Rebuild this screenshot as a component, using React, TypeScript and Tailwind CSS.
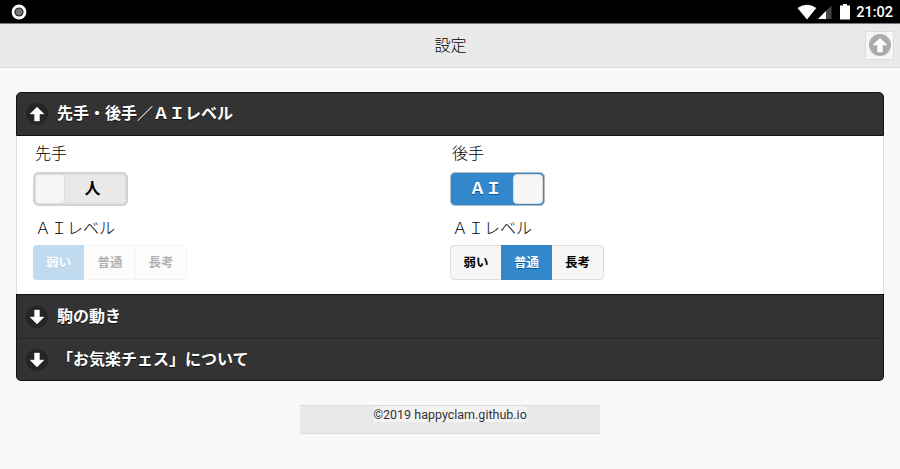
import React from "react";

const UP = "7,0 0,7 4.5,7 4.5,14 9.5,14 9.5,7 14,7";
const DOWN = "9.5,7 9.5,0 4.5,0 4.5,7 0,7 7,14 14,7";

function ArrowDisc({ down, disc }: { down?: boolean; disc: string }) {
  return (
    <svg className="h-[22px] w-[22px] shrink-0" viewBox="0 0 22 22">
      <circle cx="11" cy="11" r="11" fill={disc} />
      <polygon transform="translate(4 4)" points={down ? DOWN : UP} fill="#fff" stroke="#fff" strokeWidth="0.4" />
    </svg>
  );
}

function Heading({ text, down, className }: { text: string; down?: boolean; className: string }) {
  return (
    <h4 className={`flex items-center bg-[#333] pl-[9px] text-base font-bold text-white [text-shadow:0_1px_0_#111] ${className}`}>
      <ArrowDisc down={down} disc="#252525" />
      <span className="ml-[9px] leading-5">{text}</span>
    </h4>
  );
}

function Flip({ on, label }: { on?: boolean; label: string }) {
  return (
    <div
      className={`flex h-[34px] w-[95px] rounded-[5px] border text-base leading-[32px] font-bold ${
        on
          ? "border-[#b5bcc4] bg-[#3388cc] text-white shadow-[inset_0_0_0_1px_#3388cc] [text-shadow:0_1px_0_#005599]"
          : "flex-row-reverse border-[#d2d2d2] bg-[#e9e9e9] text-black shadow-[inset_0_0_3px_rgba(0,0,0,0.25)] [text-shadow:0_1px_0_#f3f3f3]"
      }`}
    >
      <span className={`flex-1 text-center ${on ? "pl-[8px]" : "pr-[8px]"}`}>{label}</span>
      <span className="m-[1px] h-[30px] w-[30px] rounded-[4px] border border-[#ddd] bg-[#f6f6f6]" />
    </div>
  );
}

function Levels({ selected, disabled }: { selected: number; disabled?: boolean }) {
  return (
    <div
      className={`flex h-[35px] w-[154px] rounded-[4px] border border-[#ddd] bg-[#f6f6f6] text-[12.5px] leading-[33px] font-bold ${disabled ? "opacity-30" : ""}`}
    >
      {["弱い", "普通", "長考"].map((t, i) => (
        <span
          key={t}
          className={
            i === selected
              ? `-my-px bg-[#3388cc] py-px text-center text-white [text-shadow:0_1px_0_#005599] ${i === 0 ? "-ml-px w-[51px] rounded-l-[4px]" : "w-[51px]"}`
              : `text-center text-black [text-shadow:0_1px_0_#f3f3f3] ${i === 0 ? "w-[50px]" : "flex-1"} ${i === 2 && selected === 0 ? "border-l border-[#ddd]" : ""} ${i === 1 ? "pl-px" : ""}`
          }
        >
          {t}
        </span>
      ))}
    </div>
  );
}

function Player({ name, on, label, selected, className }: { name: string; on?: boolean; label: string; selected: number; className: string }) {
  return (
    <section className={className}>
      <div className="mt-2 ml-[2px] h-5 text-base leading-5 font-light text-black">{name}</div>
      <div className="mt-[8px]">
        <Flip on={on} label={label} />
      </div>
      <div className="mt-[13px] ml-[2px] h-5 text-base leading-5 font-light text-black">ＡＩレベル</div>
      <div className="mt-[6px]">
        <Levels selected={selected} disabled={!on} />
      </div>
    </section>
  );
}

export default function App() {
  return (
    <div className="h-[469px] w-full overflow-hidden bg-[#f9f9f9] font-[Roboto,'Noto_Sans_CJK_JP',sans-serif] text-[#333] antialiased">
      <div className="flex h-[23px] items-center bg-black text-white">
        <svg className="ml-[11px] h-4 w-4" viewBox="0 0 16 16">
          <circle cx="8" cy="8" r="7.4" fill="#fff" />
          <circle cx="8" cy="8" r="4.6" fill="#333" />
          <circle cx="8" cy="8" r="3.2" fill="#777" />
        </svg>
        <svg className="ml-auto h-[23px] w-[56px]" viewBox="796 0 56 23">
          <path d="M797.5 8 Q807 1.6 816.3 8 L807 19.5Z" fill="#fff" />
          <path d="M831.5 5.5V19H818Z" fill="#444" />
          <path d="M826 11V19H818Z" fill="#fff" />
          <path d="M843 4h4v1.5h3V19.5h-10V5.5h3Z" fill="#fff" />
        </svg>
        <span className="mt-[3px] mr-[7px] ml-[4px] text-[14.5px] leading-5 font-medium">21:02</span>
      </div>
      <header className="flex h-[45px] items-center border-t border-b border-t-[#777] border-b-[#ddd] bg-[#e9e9e9]">
        <h1 className="flex-1 pt-px pl-[36px] text-center text-base leading-5 font-light text-black [text-shadow:0_1px_0_#eee]">設定</h1>
        <button className="mr-[6px] mb-px flex h-[29px] w-[29px] items-center justify-center border border-[#ddd] bg-[#f6f6f6]">
          <ArrowDisc disc="#acacac" />
        </button>
      </header>
      <main className="mx-4 mt-6">
        <Heading text="先手・後手／ＡＩレベル" className="h-[44px] rounded-t-[5px] border border-[#111]" />
        <div className="flex h-[158px] border-x border-[#ddd] bg-white">
          <Player name="先手" label="人" selected={0} className="w-[417px] pl-4" />
          <Player name="後手" on label="ＡＩ" selected={1} className="pl-4" />
        </div>
        <Heading text="駒の動き" down className="h-[44px] border-x border-t border-[#111]" />
        <Heading text="「お気楽チェス」について" down className="h-[43px] rounded-b-[5px] border border-[#111] border-t-[#262626]" />
      </main>
      <footer className="mx-auto mt-6 h-[29px] w-[300px] border-y border-[#ddd] bg-[#e9e9e9] text-center text-[12.5px] leading-[17px]">
        <span className="inline-block h-4 rounded-[4px] bg-[#f3f3f3]">©2019 happyclam.github.io</span>
      </footer>
    </div>
  );
}
